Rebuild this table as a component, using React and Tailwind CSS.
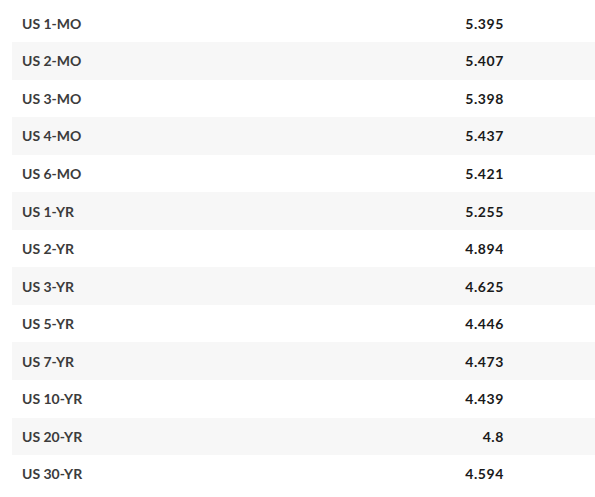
import React from "react";

const rows = [
  ["US 1-MO", "5.395"],
  ["US 2-MO", "5.407"],
  ["US 3-MO", "5.398"],
  ["US 4-MO", "5.437"],
  ["US 6-MO", "5.421"],
  ["US 1-YR", "5.255"],
  ["US 2-YR", "4.894"],
  ["US 3-YR", "4.625"],
  ["US 5-YR", "4.446"],
  ["US 7-YR", "4.473"],
  ["US 10-YR", "4.439"],
  ["US 20-YR", "4.8"],
  ["US 30-YR", "4.594"],
];

export default function App() {
  return (
    <div className="w-[595px] h-[497px] bg-white pt-[4.5px] pl-[12px] overflow-hidden" style={{ fontFamily: "Lato, 'Open Sans', sans-serif" }}>
      {rows.map(([label, value], i) => (
        <div
          key={label}
          className={`flex items-center h-[37.55px] text-[14px] font-bold ${i % 2 === 1 ? "bg-[#f7f7f7]" : "bg-white"}`}
        >
          <div className="pl-[10px] text-[#3c3c3c] flex-1">{label}</div>
          <div className="w-[120px] pr-[91px] text-right text-[#1a1a1a] tracking-[0.6px] box-content">{value}</div>
        </div>
      ))}
    </div>
  );
}
